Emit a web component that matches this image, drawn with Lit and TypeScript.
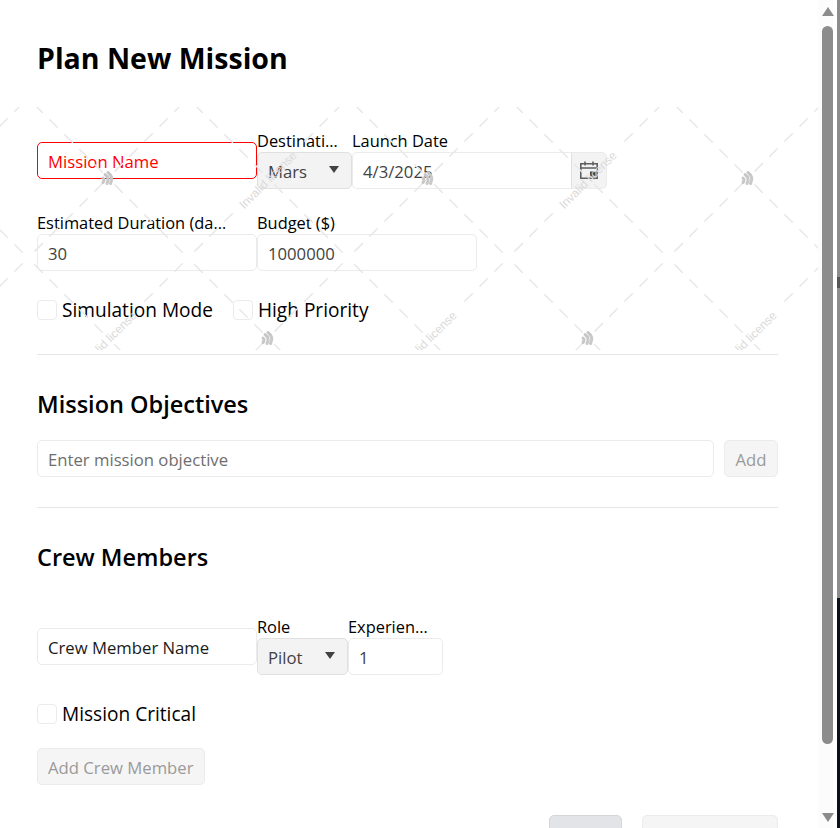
import { LitElement, html, css, svg } from "lit";
import { customElement } from "lit/decorators.js";

const TEXT_NODES = [[268, 178], [588, 178], [108, 338], [428, 338], [748, 338]];
const ICON_NODES = [[108, 178], [428, 178], [748, 178], [268, 338], [588, 338]];
const isText = (x: number, y: number) => TEXT_NODES.some(([a, b]) => a === x && b === y);

function dashes() {
  const out: Array<[number, number, number, number]> = [];
  const step = 80 * Math.SQRT2;
  for (let i = -1; i < 12; i++) {
    for (let j = -1; j < 7; j++) {
      if ((i + j) % 2 === 0) continue;
      const x = 28 + 80 * i;
      const y = 18 + 80 * j;
      for (const dy of [80, -80]) {
        const ex = x + 80;
        const ey = y + dy;
        const up = dy < 0;
        for (const p of [9, 30.2, 51.4, 72.6, 93.8]) {
          if (up && isText(x, y) && p < 44) continue;
          if (up && isText(ex, ey) && p + 12 > step - 44) continue;
          const k = 1 / Math.SQRT2;
          const sign = up ? -1 : 1;
          out.push([x + p * k, y + sign * p * k, x + (p + 12) * k, y + sign * (p + 12) * k]);
        }
      }
    }
  }
  return out;
}

@customElement("app-root")
export class AppRoot extends LitElement {
  static styles = css`
    :host { display: block; width: 840px; height: 828px; overflow: hidden; background: #8c8c8c; font-family: "Open Sans", "Noto Sans", sans-serif; color: #000; }
    .shell { display: flex; height: 828px; }
    .dialog { width: 818px; height: 828px; background: #fff; overflow: hidden; position: relative; padding: 37px 40px 0 37px; box-sizing: border-box; flex: none; }
    .sb { width: 19px; flex: none; background: linear-gradient(90deg, #fcfcfc 0, #fcfcfc 15px, #fff 15px); display: flex; flex-direction: column; align-items: center; }
    .arrow { width: 0; height: 0; border-left: 6.5px solid transparent; border-right: 6.5px solid transparent; }
    .up { border-bottom: 9px solid #8c8c8c; margin-top: 7px; }
    .thumb { width: 11px; height: 718px; border-radius: 6px; background: #8c8c8c; margin-top: 10px; }
    .down { border-top: 9px solid #8c8c8c; margin-top: auto; margin-bottom: 6px; }
    .edge { flex: 1; display: flex; flex-direction: column; background: #8c8c8c; }
    .tick { height: 11px; margin-top: 277px; background: #555; flex: none; }
    .night { flex: 1; margin-top: 310px; background: #0c1018; }
    h1 { margin: 0; font-size: 28.5px; line-height: 42px; font-weight: 700; }
    h2 { margin: 32px 0 0; font-size: 23.5px; line-height: 34px; font-weight: 600; }
    .row { display: flex; align-items: flex-start; }
    .r1 { margin-top: 52px; }
    .r2 { margin-top: 24px; }
    .r3 { margin-top: 43px; }
    .field { display: flex; flex-direction: column; flex: none; }
    .w220 { width: 220px; }
    .w95 { width: 95px; }
    .w91 { width: 91px; }
    .w255 { width: 255px; }
    .solo { margin-top: 11px; }
    .lbl { font-size: 16.4px; line-height: 23px; height: 23px; margin-top: -2px; white-space: nowrap; overflow: hidden; text-overflow: ellipsis; }
    .short { padding-right: 13px; }
    .long { padding-right: 29px; }
    .box { height: 37px; box-sizing: border-box; border: 1px solid #ebebeb; border-radius: 5px; background: #fff; padding: 1px 10px 0; display: flex; align-items: center; font-size: 16.7px; color: #424242; white-space: nowrap; }
    .err { border-color: #ff0000; color: #ff0000; }
    .dark { color: #1a1a1a; }
    .select { background: #f3f3f3; border-color: #e0e0e0; justify-content: space-between; }
    .caret { width: 0; height: 0; border-left: 5.5px solid transparent; border-right: 5.5px solid transparent; border-top: 7.5px solid #424242; margin: 0 2px 3px 0; }
    .date { display: flex; }
    .date .box { border-radius: 5px 0 0 5px; flex: 1; border-right: 1px solid #e0e0e0; }
    .cal { width: 35px; height: 37px; box-sizing: border-box; background: #f3f3f3; border-radius: 0 5px 5px 0; border: 1px solid #ebebeb; border-left: 0; display: flex; align-items: center; justify-content: center; padding-bottom: 2px; }
    .checks { display: flex; align-items: center; gap: 20px; margin-top: 25px; }
    .check { display: flex; align-items: center; gap: 5px; font-size: 19.1px; line-height: 28px; }
    .cb { width: 20px; height: 20px; box-sizing: border-box; border: 1px solid #ebebeb; border-radius: 4px; background: #fff; }
    hr { border: 0; border-top: 1px solid #e6e6e6; margin: 30px 0 0; }
    .btn { height: 37px; min-width: 54px; box-sizing: border-box; border: 1px solid #ebebeb; background: #f5f5f5; border-radius: 5px; padding: 1px 10px 0; display: flex; align-items: center; justify-content: center; font-size: 16.7px; color: #9a9a9a; white-space: nowrap; }
    .obj { display: flex; gap: 10px; margin-top: 19px; }
    .obj .box { flex: 1; color: #6e6e6e; }
    .addrow { display: flex; margin-top: 20px; }
    .foot { display: flex; justify-content: flex-end; gap: 20px; margin-top: 30px; }
    .cancel { width: 73px; background: #e3e4e8; border-color: #d6d6da; color: #333; }
    .submit { width: 136px; }
    .wm { position: absolute; left: 0; top: 107px; width: 818px; height: 243px; pointer-events: none; }
  `;

  private watermark() {
    return html`<svg class="wm" viewBox="0 107 818 243" width="818" height="243" aria-hidden="true">
      <g stroke="#e8e8e8" stroke-width="1.5" fill="none">
        ${dashes().map(([a, b, c, d]) => svg`<line x1=${a} y1=${b} x2=${c} y2=${d} />`)}
      </g>
      ${ICON_NODES.map(([x, y]) => svg`<g transform="translate(${x} ${y})" fill="none" stroke="#c8c8c8" stroke-width="3" stroke-linecap="round">
        <path d="M-5 0 Q-3 2 -5 4.5" />
        <path d="M-3 -3.5 Q2 0 -1 5.5" />
        <path d="M0 -5.5 Q6 -1 2.5 5.5" />
      </g>`)}
      ${TEXT_NODES.map(([x, y]) => svg`<text transform="translate(${x} ${y + 2}) rotate(-45)" text-anchor="middle" y="4" font-size="12" fill="#dadada" font-family="Liberation Sans, sans-serif">Invalid license</text>`)}
    </svg>`;
  }

  render() {
    return html`<div class="shell">
      <div class="dialog">
        <h1>Plan New Mission</h1>
        <div class="row r1">
          <div class="field w220 solo"><div class="box err">Mission Name</div></div>
          <div class="field w95"><div class="lbl short">Destination</div><div class="box select">Mars<span class="caret"></span></div></div>
          <div class="field w255"><div class="lbl">Launch Date</div><div class="date"><div class="box">4/3/2025</div><div class="cal"><svg width="20" height="20" viewBox="0 0 20 20" fill="none" stroke="#5f5f5f" stroke-width="1.6"><path d="M1.8 3.8h16.4v14.4H1.8z M1.8 8h16.4"/><path d="M6 1.5v4M14 1.5v4"/><rect x="11" y="11.5" width="5.5" height="5" fill="#424242" stroke="none"/></svg></div></div></div>
        </div>
        <div class="row r2">
          <div class="field w220"><div class="lbl long">Estimated Duration (days)</div><div class="box">30</div></div>
          <div class="field w220"><div class="lbl">Budget ($)</div><div class="box">1000000</div></div>
        </div>
        <div class="checks">
          <div class="check"><span class="cb"></span>Simulation Mode</div>
          <div class="check"><span class="cb"></span>High Priority</div>
        </div>
        <hr />
        <h2>Mission Objectives</h2>
        <div class="obj"><div class="box">Enter mission objective</div><div class="btn">Add</div></div>
        <hr />
        <h2>Crew Members</h2>
        <div class="row r3">
          <div class="field w220 solo"><div class="box dark">Crew Member Name</div></div>
          <div class="field w91"><div class="lbl">Role</div><div class="box select">Pilot<span class="caret"></span></div></div>
          <div class="field w95"><div class="lbl short">Experience</div><div class="box">1</div></div>
        </div>
        <div class="checks"><div class="check"><span class="cb"></span>Mission Critical</div></div>
        <div class="addrow"><div class="btn">Add Crew Member</div></div>
        <div class="foot"><div class="btn cancel">Cancel</div><div class="btn submit">Create Mission</div></div>
        ${this.watermark()}
      </div>
      <div class="sb"><span class="arrow up"></span><span class="thumb"></span><span class="arrow down"></span></div>
      <div class="edge"><span class="tick"></span><span class="night"></span></div>
    </div>`;
  }
}
